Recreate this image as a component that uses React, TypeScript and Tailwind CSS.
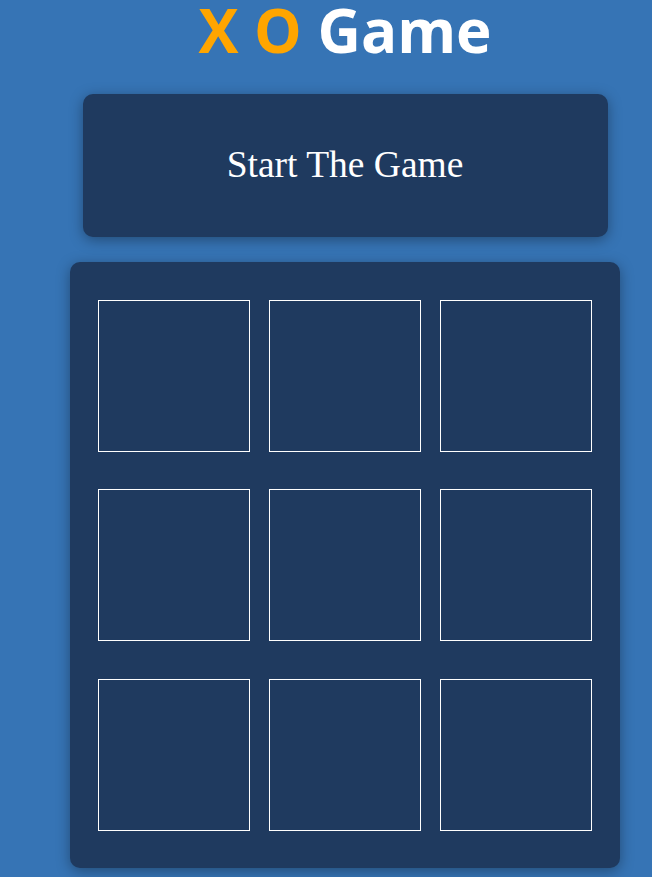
export default function App() {
  const cells = Array.from({ length: 9 })

  return (
    <div className="min-h-screen bg-[#3674b5] pl-[38px] pb-10">
      <div className="flex flex-col items-center">
        {/* Title */}
        <h1 className="text-[60px] leading-none font-bold font-['Open_Sans',sans-serif]">
          <span className="inline-block leading-none text-[#ffa500]">X O</span>{' '}
          <span className="inline-block leading-none text-white">Game</span>
        </h1>

        {/* Start button */}
        <div className="mt-[34px] w-[525px] h-[143px] rounded-[10px] bg-[#1f3a5f] shadow-[0_3px_14px_rgba(0,0,0,0.35)] flex items-center justify-center">
          <span className="text-white text-[37.5px] leading-none -mt-[2px] font-['Liberation_Serif',serif]">Start The Game</span>
        </div>

        {/* Board */}
        <div className="mt-[25px] w-[550px] rounded-[10px] bg-[#1f3a5f] shadow-[0_3px_14px_rgba(0,0,0,0.35)] px-[28px] pt-[38px] pb-[37px]">
          <div className="grid grid-cols-[repeat(3,152px)] grid-rows-[152px_153px_152px] gap-x-[19px] gap-y-[37px] items-start">
            {cells.map((_, i) => (
              <div key={i} className="w-[152px] h-[152px] border border-white" />
            ))}
          </div>
        </div>
      </div>
    </div>
  )
}
